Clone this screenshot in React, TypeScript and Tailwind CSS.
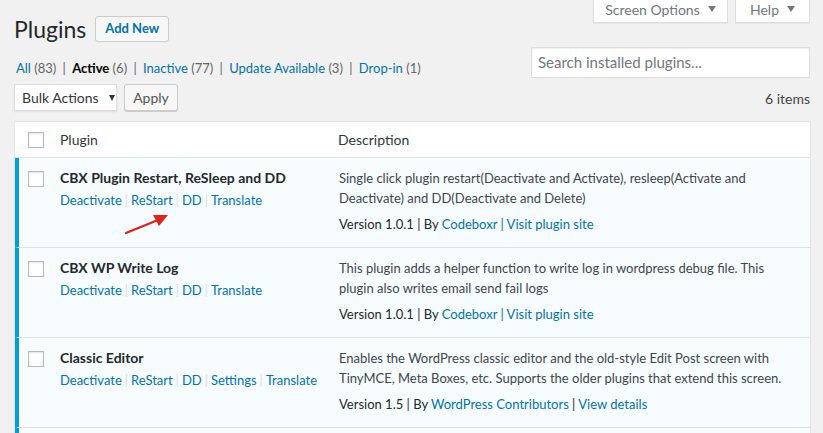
import React from 'react';

type Plugin = {
    name: string;
    actions: string[];
    desc: string;
    version: string;
    author: string;
    link: string;
    pipeBlue?: boolean;
};

const plugins: Plugin[] = [
    {
        name: 'CBX Plugin Restart, ReSleep and DD',
        actions: ['Deactivate', 'ReStart', 'DD', 'Translate'],
        desc: 'Single click plugin restart(Deactivate and Activate), resleep(Activate and Deactivate) and DD(Deactivate and Delete)',
        version: '1.0.1',
        author: 'Codeboxr',
        link: 'Visit plugin site',
        pipeBlue: true,
    },
    {
        name: 'CBX WP Write Log',
        actions: ['Deactivate', 'ReStart', 'DD', 'Translate'],
        desc: 'This plugin adds a helper function to write log in wordpress debug file. This plugin also writes email send fail logs',
        version: '1.0.1',
        author: 'Codeboxr',
        link: 'Visit plugin site',
        pipeBlue: true,
    },
    {
        name: 'Classic Editor',
        actions: ['Deactivate', 'ReStart', 'DD', 'Settings', 'Translate'],
        desc: 'Enables the WordPress classic editor and the old-style Edit Post screen with TinyMCE, Meta Boxes, etc. Supports the older plugins that extend this screen.',
        version: '1.5',
        author: 'WordPress Contributors',
        link: 'View details',
    },
];

function Checkbox() {
    return <span className="block size-4 border border-[#b4b9be] bg-white shadow-[inset_0_1px_2px_rgba(0,0,0,0.1)]" />;
}

function Caret() {
    return <span className="ml-[8px] inline-block border-x-[4px] border-t-[6px] border-x-transparent border-t-[#72777c] align-middle" />;
}

function Row({ plugin, first }: { plugin: Plugin; first?: boolean }) {
    return (
        <div className="relative flex h-[90px] border-b border-l-4 border-b-[#e1e1e1] border-l-[#00a0d2] bg-[#f7fcfe]">
            <div className="w-[28px] shrink-0 pt-[13px] pl-[9px]">
                <Checkbox />
            </div>
            <div className="w-[278px] shrink-0 pt-[9px] pl-[13px]">
                <div className="text-[14px] leading-[22px] font-bold text-[#23282d]">{plugin.name}</div>
                <div className="leading-[22px] text-[#ddd]">
                    {plugin.actions.map((a, i) => (
                        <span key={a}>
                            {i > 0 && <span className="px-[3px]">|</span>}
                            <span className="text-[#0073aa]">{a}</span>
                        </span>
                    ))}
                </div>
            </div>
            <div className="flex-1 pt-[11px] pr-[18px] pl-[14px]">
                <p className="leading-[19.5px] text-[#40464d]">{plugin.desc}</p>
                <p className="mt-[7px] leading-[19.5px] text-[#23282d]">
                    Version {plugin.version} | By <span className="text-[#0073aa]">{plugin.author}</span>{' '}
                    <span className={plugin.pipeBlue ? 'text-[#0073aa]' : ''}>|</span> <span className="text-[#0073aa]">{plugin.link}</span>
                </p>
            </div>
            {first && (
                <svg className="absolute top-[55px] left-[105px]" width="46" height="24" viewBox="0 0 46 24">
                    <line x1="2" y1="20" x2="34" y2="7" stroke="#e3211c" strokeWidth="2.2" strokeLinecap="round" />
                    <polygon points="44,2 29,2 35,13" fill="#e3211c" />
                </svg>
            )}
        </div>
    );
}

export default function App() {
    return (
        <div className="min-h-[433px] overflow-hidden bg-[#f1f1f1] font-['Lato',sans-serif] text-[13px] text-[#444]">
            <div className="flex items-start justify-between pr-[13px] pl-[14px]">
                <div className="flex items-center pt-[16px]">
                    <h1 className="text-[23px] leading-[26px] text-[#23282d]">Plugins</h1>
                    <button className="ml-[9px] h-[26px] rounded-[3px] border border-[#ccc] bg-[#f7f7f7] px-[9px] text-[13px] font-bold text-[#0073aa]">
                        Add New
                    </button>
                </div>
                <div className="flex gap-[7px]">
                    <div className="flex h-[23px] w-[135px] items-center justify-center border border-t-0 border-[#ddd] bg-white pb-[4px] text-[14px] text-[#72777c] shadow-[0_1px_1px_rgba(0,0,0,0.04)]">
                        Screen Options <Caret />
                    </div>
                    <div className="flex h-[23px] w-[75px] items-center justify-center border border-t-0 border-[#ddd] bg-white pb-[4px] text-[14px] text-[#72777c] shadow-[0_1px_1px_rgba(0,0,0,0.04)]">
                        Help <Caret />
                    </div>
                </div>
            </div>

            <div className="mt-[5px] flex items-end justify-between pr-[13px] pl-[16px]">
                <div className="text-[#666]">
                    <span className="text-[#0073aa]">All</span> (83) <span className="px-[3px]">|</span>{' '}
                    <span className="font-bold text-black">Active</span> (6) <span className="px-[3px]">|</span>{' '}
                    <span className="text-[#0073aa]">Inactive</span> (77) <span className="px-[3px]">|</span>{' '}
                    <span className="text-[#0073aa]">Update Available</span> (3) <span className="px-[3px]">|</span>{' '}
                    <span className="text-[#0073aa]">Drop-in</span> (1)
                </div>
                <div className="flex h-[31px] w-[279px] items-center border border-[#ddd] bg-white px-[6px] text-[15px] text-[#72777c] shadow-[inset_0_1px_2px_rgba(0,0,0,0.07)]">
                    Search installed plugins...
                </div>
            </div>

            <div className="mt-[6px] flex items-center justify-between pr-[13px] pl-[14px]">
                <div className="flex gap-[7px]">
                    <div className="flex h-[27px] w-[103px] items-center border border-[#ddd] bg-white pl-[7px] text-[14px] text-[#32373c] shadow-[0_1px_2px_rgba(0,0,0,0.07)]">
                        Bulk Actions
                        <span className="ml-[10px] inline-block border-x-[3px] border-t-[6px] border-x-transparent border-t-[#32373c]" />
                    </div>
                    <button className="h-[27px] w-[54px] rounded-[3px] border border-[#ccc] bg-[#f7f7f7] text-[14px] text-[#555] shadow-[0_1px_0_#ccc]">
                        Apply
                    </button>
                </div>
                <div className="pt-[2px] text-[14px] text-[#444]">6 items</div>
            </div>

            <div className="mt-[10px] mr-[12px] ml-[14px] border border-[#e5e5e5] bg-white shadow-[0_1px_1px_rgba(0,0,0,0.04)]">
                <div className="flex h-[36px] items-center border-b border-[#e1e1e1] text-[14px] text-[#32373c]">
                    <div className="w-[32px] shrink-0 pl-[13px]">
                        <Checkbox />
                    </div>
                    <div className="w-[277px] shrink-0 pl-[13px]">Plugin</div>
                    <div className="pl-[14px]">Description</div>
                </div>
                {plugins.map((p, i) => (
                    <Row key={p.name} plugin={p} first={i === 0} />
                ))}
                <div className="h-[20px] border-l-4 border-l-[#00a0d2] bg-[#f7fcfe]" />
            </div>
        </div>
    );
}
